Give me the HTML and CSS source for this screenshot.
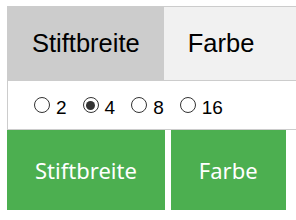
FILE: index.html
```html
<!DOCTYPE html>
<html>
<head>
<meta charset="utf-8">
<link rel="stylesheet" href="styles.css">
</head>
<body>
<div class="page">
  <div class="tabbar">
    <div class="tab active">Stiftbreite</div>
    <div class="tab">Farbe</div>
  </div>
  <div class="content">
    <label class="opt"><span class="radio"></span><span class="num">2</span></label>
    <label class="opt"><span class="radio checked"></span><span class="num">4</span></label>
    <label class="opt"><span class="radio"></span><span class="num">8</span></label>
    <label class="opt"><span class="radio"></span><span class="num">16</span></label>
  </div>
  <div class="buttons">
    <div class="btn">Stiftbreite</div>
    <div class="btn">Farbe</div>
  </div>
</div>
</body>
</html>
```
FILE: styles.css
```css
html, body {
  margin: 0;
  padding: 0;
  background: #fff;
  overflow: hidden;
}
.page {
  padding: 6px 0 0 7px;
  width: 289px;
}
.tabbar {
  display: flex;
  height: 73px;
  border: 1px solid #ccc;
  border-right: none;
  background: #f1f1f1;
}
.tab {
  display: flex;
  align-items: center;
  padding: 0 24px;
  font-family: "Liberation Sans", Arial, sans-serif;
  font-size: 25.5px;
  color: #000;
}
.tab.active {
  background: #ccc;
}
.content {
  display: flex;
  align-items: center;
  height: 48px;
  padding-left: 26px;
  border-left: 1px solid #ccc;
  border-bottom: 1px solid #ccc;
  font-family: "Liberation Sans", Arial, sans-serif;
  font-size: 19px;
  color: #000;
}
.opt {
  display: flex;
  align-items: center;
  margin-right: 16px;
}
.radio {
  flex: none;
  box-sizing: border-box;
  width: 16px;
  height: 16px;
  border: 1px solid #333;
  border-radius: 50%;
  background: #fff;
  display: flex;
  align-items: center;
  justify-content: center;
}
.radio.checked::after {
  content: "";
  width: 9px;
  height: 9px;
  border-radius: 50%;
  background: #333;
}
.num {
  margin-left: 6px;
  line-height: 1;
  padding-top: 4px;
}
.buttons {
  display: flex;
  gap: 6px;
}
.btn {
  display: flex;
  align-items: center;
  justify-content: center;
  height: 80px;
  padding: 0 28px;
  background: #4caf50;
  color: #fff;
  font-family: "Noto Sans", "Open Sans", sans-serif;
  font-size: 22px;
}
```
